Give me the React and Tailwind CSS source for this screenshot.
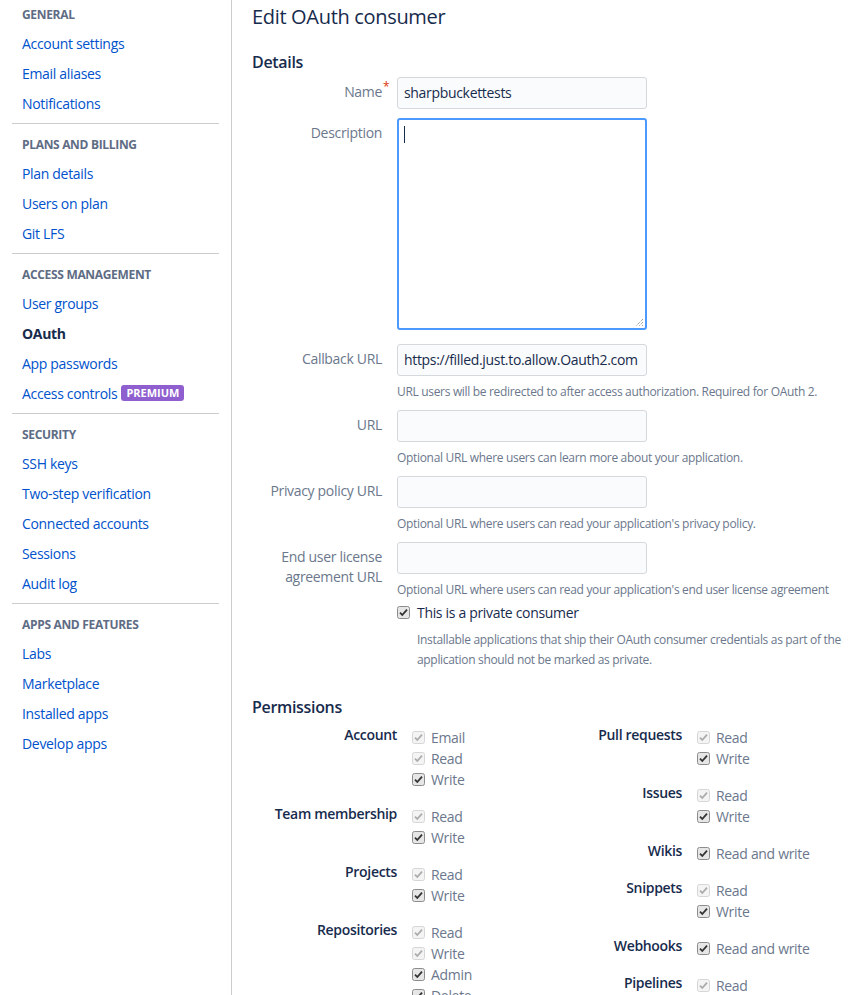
import React from "react";

const sections = [
  { title: "GENERAL", items: [{ t: "Account settings" }, { t: "Email aliases" }, { t: "Notifications" }] },
  { title: "PLANS AND BILLING", items: [{ t: "Plan details" }, { t: "Users on plan" }, { t: "Git LFS" }] },
  {
    title: "ACCESS MANAGEMENT",
    items: [{ t: "User groups" }, { t: "OAuth", active: true }, { t: "App passwords" }, { t: "Access controls", premium: true }],
  },
  {
    title: "SECURITY",
    items: [{ t: "SSH keys" }, { t: "Two-step verification" }, { t: "Connected accounts" }, { t: "Sessions" }, { t: "Audit log" }],
  },
  { title: "APPS AND FEATURES", items: [{ t: "Labs" }, { t: "Marketplace" }, { t: "Installed apps" }, { t: "Develop apps" }] },
];

const leftPerms = [
  { label: "Account", opts: [["Email", true], ["Read", true], ["Write", false]] },
  { label: "Team membership", opts: [["Read", true], ["Write", false]] },
  { label: "Projects", opts: [["Read", true], ["Write", false]] },
  { label: "Repositories", opts: [["Read", true], ["Write", true], ["Admin", false], ["Delete", false]] },
];

const rightPerms = [
  { label: "Pull requests", opts: [["Read", true], ["Write", false]] },
  { label: "Issues", opts: [["Read", true], ["Write", false]] },
  { label: "Wikis", opts: [["Read and write", false]] },
  { label: "Snippets", opts: [["Read", true], ["Write", false]] },
  { label: "Webhooks", opts: [["Read and write", false]] },
  { label: "Pipelines", opts: [["Read", true], ["Write", false], ["Edit variables", false]] },
];

function Check({ disabled }) {
  return (
    <svg width="13" height="13" viewBox="0 0 13 13" className="shrink-0">
      <rect
        x="0.5"
        y="0.5"
        width="12"
        height="12"
        rx="2"
        fill={disabled ? "#f4f4f4" : "#e6e6e6"}
        stroke={disabled ? "#d6d6d6" : "#8c8c8c"}
      />
      <path
        d="M3 6.6 L5.3 9 L10 3.6"
        fill="none"
        stroke={disabled ? "#acacac" : "#333333"}
        strokeWidth="1.8"
      />
    </svg>
  );
}

function Sidebar() {
  return (
    <aside className="w-[232px] shrink-0 border-r border-[#cccccc] px-[12px]">
      {sections.map((s, i) => (
        <div key={s.title} className={i > 0 ? "border-t border-[#cccccc] pt-[6px] pb-[5px]" : "pb-[5px]"}>
          <div className="pl-[10px] pt-[1px] text-[12px] leading-[27px] h-[28px] font-bold text-[#5e6c84]">{s.title}</div>
          {s.items.map((it) => (
            <div key={it.t} className="flex items-center h-[30px] pl-[10px] text-[14px]">
              <span className={it.active ? "font-bold text-[#172b4d]" : "text-[#0052cc]"}>{it.t}</span>
              {it.premium && (
                <span className="ml-[4px] h-[16px] leading-[16px] rounded-[3px] bg-[#8f5fcf] px-[5px] text-[11px] font-bold text-white tracking-normal">
                  PREMIUM
                </span>
              )}
            </div>
          ))}
        </div>
      ))}
    </aside>
  );
}

function Field({ label, children, help, mb = "mb-[8px]", twoLine }) {
  return (
    <div className={`flex gap-[15px] ${mb}`}>
      <div className="w-[130px] shrink-0 pt-[5px] text-right text-[14px] leading-[20px] text-[#6b778c]">
        {twoLine ? (
          <>
            End user license
            <br />
            agreement URL
          </>
        ) : (
          label
        )}
      </div>
      <div className="flex-1">
        {children}
        {help && <div className="mt-[6px] text-[12px] leading-[20px] text-[#6b778c] whitespace-nowrap">{help}</div>}
      </div>
    </div>
  );
}

function Input({ value }) {
  return (
    <div className="h-[32px] w-[250px] rounded-[3px] border border-[#d5d8dd] bg-[#fafbfc] px-[6px] text-[14px] leading-[30px] text-[#172b4d] whitespace-nowrap overflow-hidden">
      {value}
    </div>
  );
}

function PermColumn({ groups }) {
  return (
    <div className="w-[285px]">
      {groups.map((g) => (
        <div key={g.label} className="flex gap-[15px] mb-[13px]">
          <div className="w-[145px] shrink-0 text-right text-[14px] leading-[21px] font-semibold text-[#172b4d]">{g.label}</div>
          <div className="pt-[3px]">
            {g.opts.map(([o, d]) => (
              <div key={o} className="flex items-center h-[21px] gap-[6px] text-[14px] text-[#6b778c]">
                <Check disabled={d} />
                <span>{o}</span>
              </div>
            ))}
          </div>
        </div>
      ))}
    </div>
  );
}

export default function App() {
  return (
    <div className="flex min-h-screen bg-white font-['Open_Sans',sans-serif] tracking-[-0.02em] text-[#172b4d]">
      <Sidebar />
      <main className="flex-1 pl-[20px] pr-[16px] pb-[40px]">
        <h1 className="pt-[3px] text-[20px] leading-[28px] font-medium text-[#172b4d]">Edit OAuth consumer</h1>
        <h2 className="mt-[19px] text-[16px] leading-[24px] font-semibold text-[#172b4d]">Details</h2>
        <div className="mt-[3px]">
          <Field
            mb="mb-[9px]"
            label={
              <span className="relative">
                Name
                <span className="absolute left-full -top-[5px] ml-[1px] text-[12px] text-[#de350b]">*</span>
              </span>
            }
          >
            <Input value="sharpbuckettests" />
          </Field>
          <Field label="Description" mb="mb-[14px]">
            <div className="relative h-[212px] w-[250px] rounded-[3px] border-2 border-[#4c9aff] bg-white">
              <div className="absolute left-[5px] top-[6px] h-[17px] w-px bg-[#172b4d]" />
              <svg width="10" height="10" viewBox="0 0 10 10" className="absolute right-[1px] bottom-[1px]">
                <path d="M9 2 L2 9 M9 5 L5 9 M9 8 L8 9" stroke="#777" strokeWidth="1" strokeDasharray="1 1" />
              </svg>
            </div>
          </Field>
          <Field label="Callback URL" help="URL users will be redirected to after access authorization. Required for OAuth 2.">
            <Input value="https://filled.just.to.allow.Oauth2.com" />
          </Field>
          <Field label="URL" help="Optional URL where users can learn more about your application.">
            <Input value="" />
          </Field>
          <Field label="Privacy policy URL" help="Optional URL where users can read your application's privacy policy.">
            <Input value="" />
          </Field>
          <Field twoLine mb="mb-0" help="Optional URL where users can read your application's end user license agreement">
            <Input value="" />
          </Field>
          <div className="flex gap-[15px]">
            <div className="w-[130px] shrink-0" />
            <div className="flex-1">
              <div className="mt-[2px] flex items-center gap-[7px] h-[20px] text-[14px] text-[#172b4d]">
                <Check disabled={false} />
                <span>This is a private consumer</span>
              </div>
              <div className="mt-[8px] pl-[20px] text-[12px] leading-[20px] text-[#6b778c] whitespace-nowrap">
                Installable applications that ship their OAuth consumer credentials as part of the
                <br />
                application should not be marked as private.
              </div>
            </div>
          </div>
        </div>
        <h2 className="mt-[25px] text-[16px] leading-[24px] font-semibold text-[#172b4d]">Permissions</h2>
        <div className="mt-[5px] flex">
          <PermColumn groups={leftPerms} />
          <PermColumn groups={rightPerms} />
        </div>
      </main>
    </div>
  );
}
